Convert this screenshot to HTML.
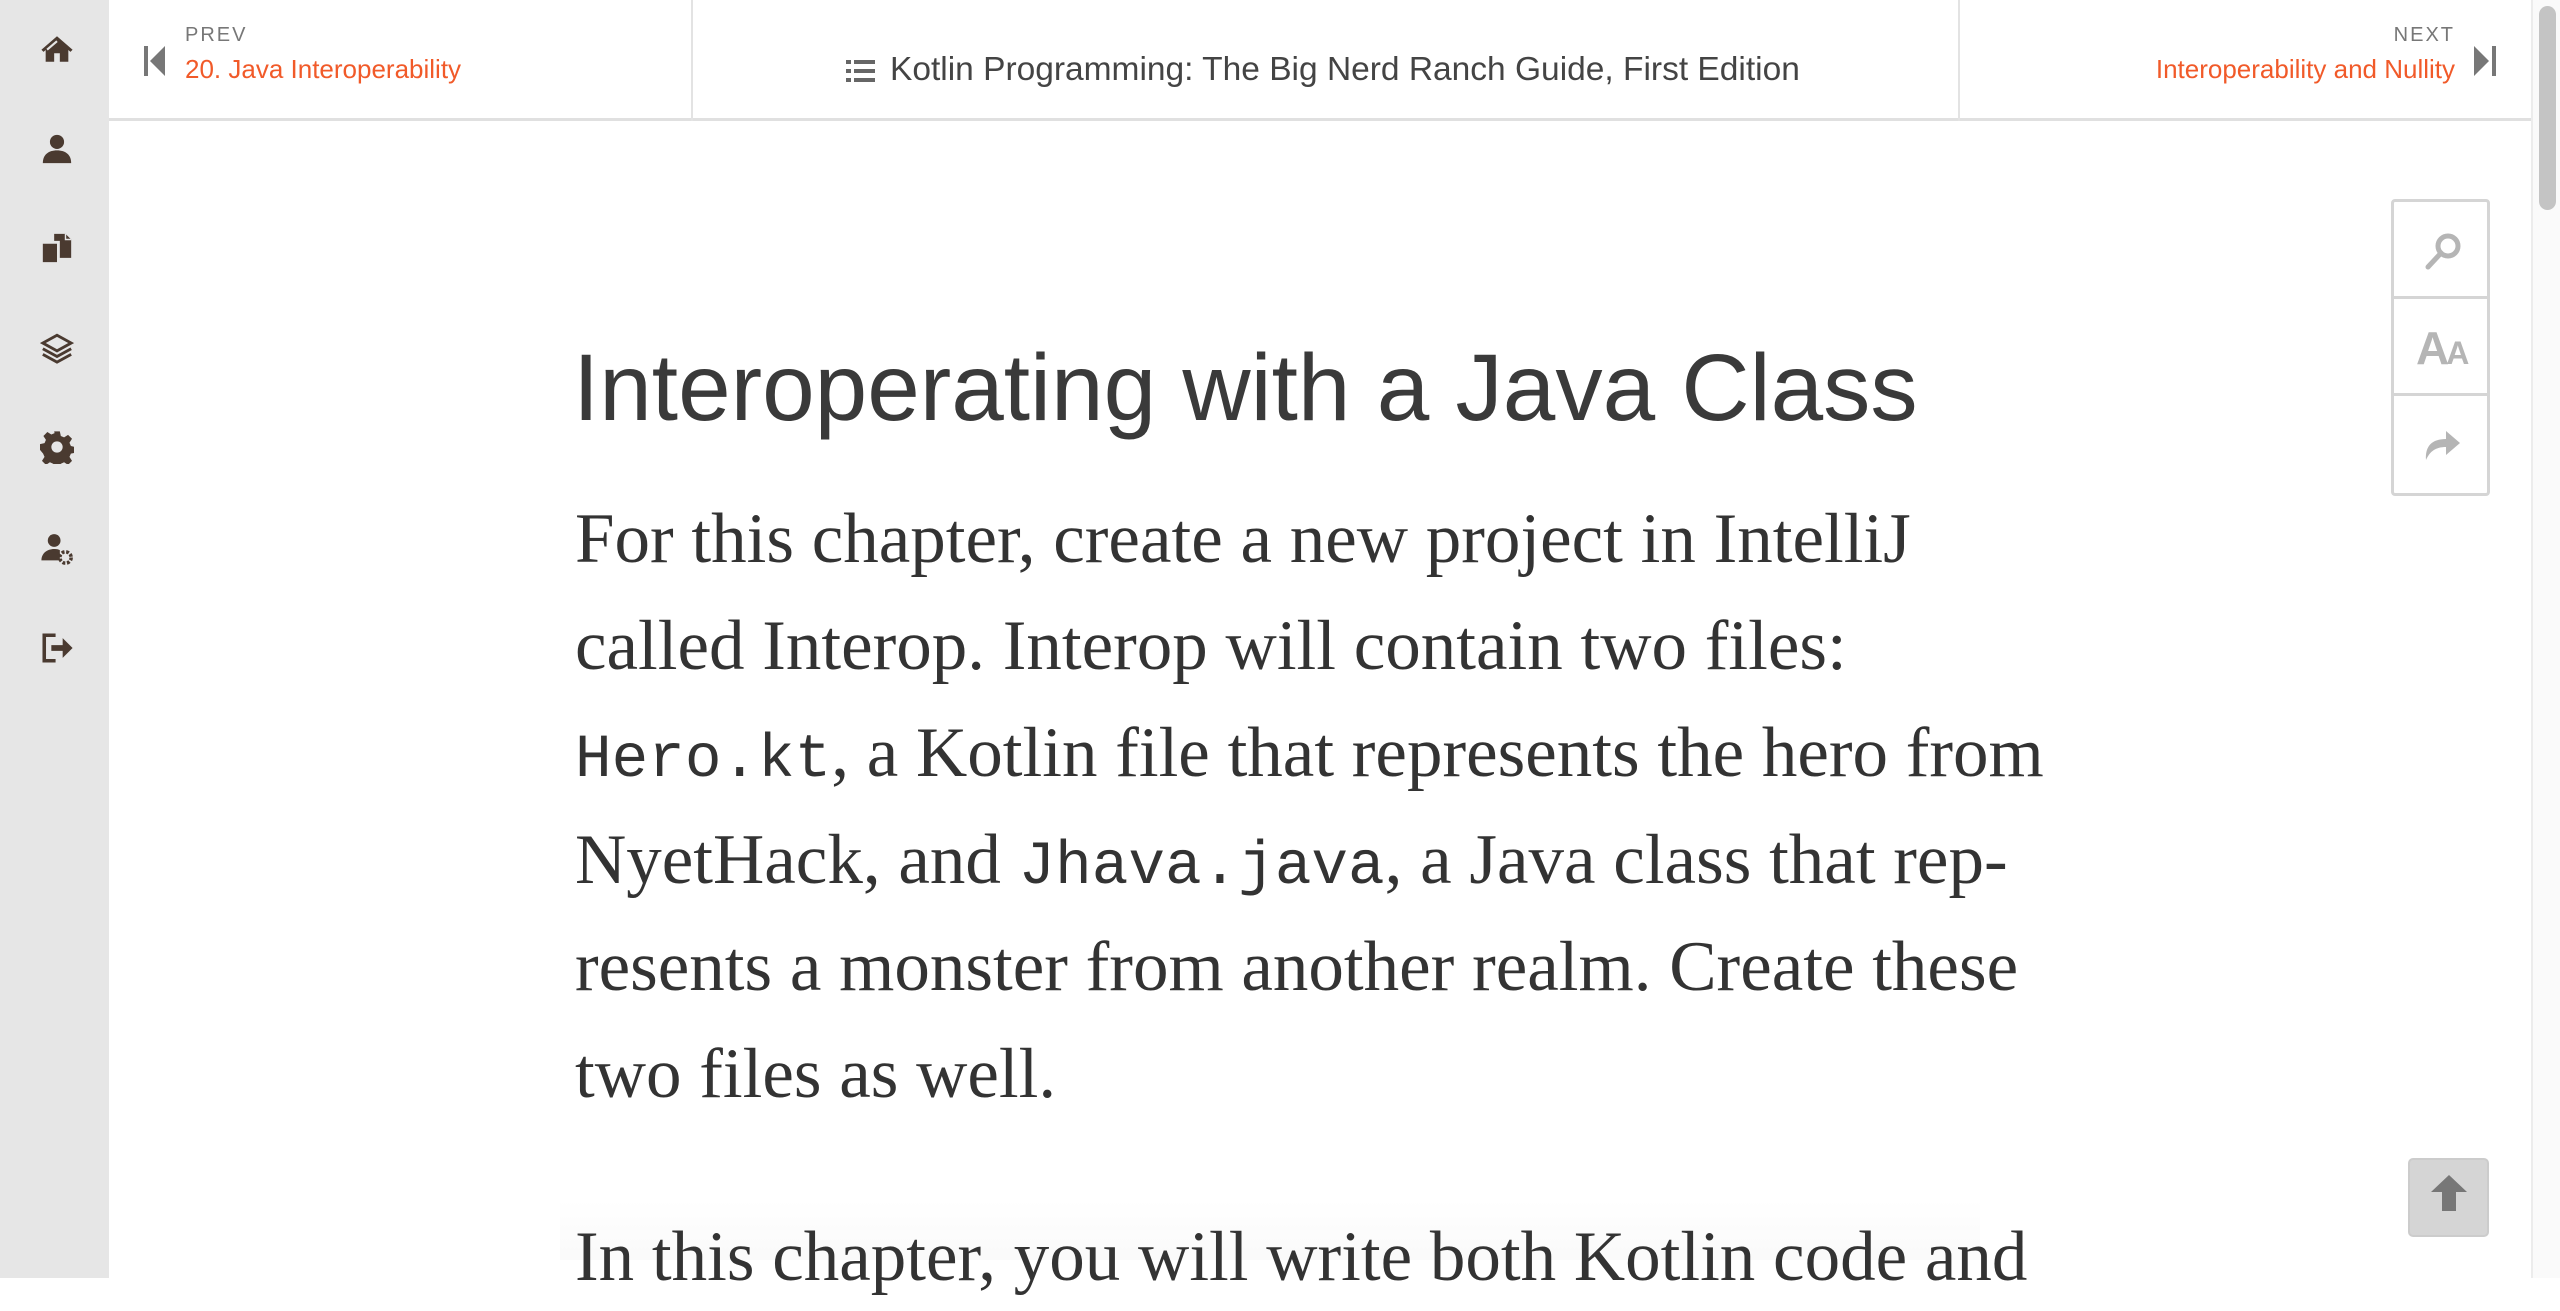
<!DOCTYPE html>
<html><head><meta charset="utf-8"><style>
*{margin:0;padding:0;box-sizing:border-box}
html,body{width:2560px;height:1278px;overflow:hidden;background:#fff;font-family:"Liberation Sans",sans-serif}
.side{position:absolute;left:0;top:0;width:109px;height:1278px;background:#e6e6e6}
.side svg{position:absolute;left:40px;width:34px;height:34px}
.hdr{position:absolute;left:109px;top:0;width:2422px;height:121px;border-bottom:3px solid #e0e0e0;background:#fff}
.div{position:absolute;top:0;width:2px;height:121px;background:#e3e3e3}
.lbl{position:absolute;font-size:20px;letter-spacing:2px;color:#777}
.lnk{position:absolute;font-size:26px;color:#f15a29;white-space:nowrap}
.ctr{position:absolute;top:51px;font-size:33.5px;color:#444;white-space:nowrap}
.tools{position:absolute;left:2391px;top:199px;width:99px;height:297px;border:3px solid #d5d5d5;border-radius:4px}
.tools .c{height:97px;border-bottom:3px solid #d5d5d5;position:relative}
.tools .c:last-child{border-bottom:none}
h1{position:absolute;left:573px;top:341px;font-size:94.5px;line-height:94px;font-weight:normal;color:#3a3a3a;white-space:nowrap}
.p{position:absolute;left:575px;font-family:"Liberation Serif",serif;font-size:71px;line-height:107px;color:#333;white-space:nowrap}
.p code{font-family:"Liberation Mono",monospace;font-size:61px;line-height:0;vertical-align:baseline}
.up{position:absolute;left:2408px;top:1158px;width:81px;height:79px;background:#d5d5d5;border:2px solid #ccc;border-radius:5px}
.sb{position:absolute;left:2531px;top:0;width:29px;height:1278px;background:#fafafa;border-left:2px solid #ececec}
.th{position:absolute;left:2539px;top:6px;width:17px;height:204px;background:#c4c4c4;border-radius:9px}
.fade{position:absolute;left:560px;top:1200px;width:1420px;height:60px;background:linear-gradient(#fff,#f6f6f6);opacity:.6}
</style></head><body>
<div class="side">
<svg style="top:32px" viewBox="0 0 24 24"><path d="M12 3 1 12.5l1.5 1.5L4 12.7V21h6v-6h4v6h6v-8.3l1.5 1.3 1.5-1.5z" fill="#4a3a30"/><path d="M12 6.5 5 12.5" stroke="#e6e6e6" stroke-width="1.5"/></svg>
<svg style="top:132px" viewBox="0 0 24 24"><circle cx="12" cy="7" r="5" fill="#4a3a30"/><path d="M2 22c0-6 4-9 10-9s10 3 10 9z" fill="#4a3a30"/></svg>
<svg style="top:231px" viewBox="0 0 24 24"><path d="M2 9h10v13H2z" fill="#4a3a30"/><path d="M10 2h8l4 4v13h-8V7h-4z" fill="#4a3a30"/><path d="M18 2v4h4" fill="none" stroke="#e6e6e6" stroke-width="1"/></svg>
<svg style="top:331px" viewBox="0 0 24 24" fill="none" stroke="#4a3a30" stroke-width="2"><path d="M12 3 2 8.5 12 14l10-5.5z"/><path d="M2 12.5 12 18l10-5.5"/><path d="M2 16.5 12 22l10-5.5"/></svg>
<svg style="top:430px" viewBox="0 0 24 24"><path d="M10 1h4l.7 3.2 2.3 1 2.8-1.8 2.8 2.8-1.8 2.8 1 2.3 3.2.7v4l-3.2.7-1 2.3 1.8 2.8-2.8 2.8-2.8-1.8-2.3 1-.7 3.2h-4l-.7-3.2-2.3-1-2.8 1.8-2.8-2.8 1.8-2.8-1-2.3L0 14v-4l3.2-.7 1-2.3-1.8-2.8 2.8-2.8 2.8 1.8 2.3-1z" fill="#4a3a30"/><circle cx="12" cy="12" r="4" fill="#e6e6e6"/></svg>
<svg style="top:532px" viewBox="0 0 24 24"><circle cx="10" cy="6" r="4.5" fill="#4a3a30"/><path d="M1 20c0-5 4-8 9-8 2 0 3 .3 4 .8V20z" fill="#4a3a30"/><circle cx="18" cy="18" r="4" fill="none" stroke="#4a3a30" stroke-width="2.5" stroke-dasharray="2 1.2"/></svg>
<svg style="top:631px" viewBox="0 0 24 24"><path d="M11 3H3v18h8" fill="none" stroke="#4a3a30" stroke-width="2.5"/><path d="M8 10h8V5l7 7-7 7v-5H8z" fill="#4a3a30"/></svg>
</div>
<div class="hdr">
<svg style="position:absolute;left:35px;top:46px" width="22" height="30" viewBox="0 0 22 30"><rect x="0" y="0" width="4" height="30" fill="#777"/><path d="M21 0v30L6 15z" fill="#777"/></svg>
<div class="lbl" style="left:76px;top:24px">PREV</div>
<div class="lnk" style="left:76px;top:54px">20. Java Interoperability</div>
<div class="div" style="left:582px"></div>
<svg style="position:absolute;left:737px;top:59px" width="29" height="24" viewBox="0 0 29 24" fill="#666"><rect x="0" y="1" width="5" height="4"/><rect x="8" y="1" width="21" height="4"/><rect x="0" y="10" width="5" height="4"/><rect x="8" y="10" width="21" height="4"/><rect x="0" y="19" width="5" height="4"/><rect x="8" y="19" width="21" height="4"/></svg>
<div class="ctr" style="left:781px">Kotlin Programming: The Big Nerd Ranch Guide, First Edition</div>
<div class="div" style="left:1849px"></div>
<div class="lbl" style="right:76px;top:24px">NEXT</div>
<div class="lnk" style="right:76px;top:54px">Interoperability and Nullity</div>
<svg style="position:absolute;left:2365px;top:46px" width="22" height="30" viewBox="0 0 22 30"><path d="M0 0v30l15-15z" fill="#777"/><rect x="18" y="0" width="4" height="30" fill="#777"/></svg>
</div>
<div class="tools">
<div class="c"><svg style="position:absolute;left:30px;top:30px" width="38" height="38" viewBox="0 0 38 38"><circle cx="24" cy="14" r="10" fill="none" stroke="#b5b5b5" stroke-width="5"/><path d="M17 21 4 35" stroke="#b5b5b5" stroke-width="5" stroke-linecap="round"/></svg></div>
<div class="c"><div style="position:absolute;left:22px;top:22px;font-size:46px;font-weight:bold;color:#b5b5b5;letter-spacing:-3px">A<span style="font-size:32px">A</span></div></div>
<div class="c"><svg style="position:absolute;left:28px;top:28px" width="42" height="38" viewBox="0 0 42 38"><path d="M4 36C3 22 10 15 24 15V7l14 12-14 12v-8C14 23 8 27 4 36z" fill="#b5b5b5"/></svg></div>
</div>
<h1>Interoperating with a Java Class</h1>
<div class="p" style="top:486px">For this chapter, create a new project in IntelliJ<br>called Interop. Interop will contain two files:<br><code>Hero.kt</code>, a Kotlin file that represents the hero from<br>NyetHack, and <code>Jhava.java</code>, a Java class that rep-<br>resents a monster from another realm. Create these<br>two files as well.</div>
<div class="fade"></div>
<div class="p" style="top:1204px">In this chapter, you will write both Kotlin code and</div>
<div class="up"><svg style="position:absolute;left:20px;top:13px" width="38" height="40" viewBox="0 0 38 40"><path d="M19 2 1 19h11v19h14V19h11z" fill="#777"/></svg></div>
<div class="sb"></div><div class="th"></div>
</body></html>
